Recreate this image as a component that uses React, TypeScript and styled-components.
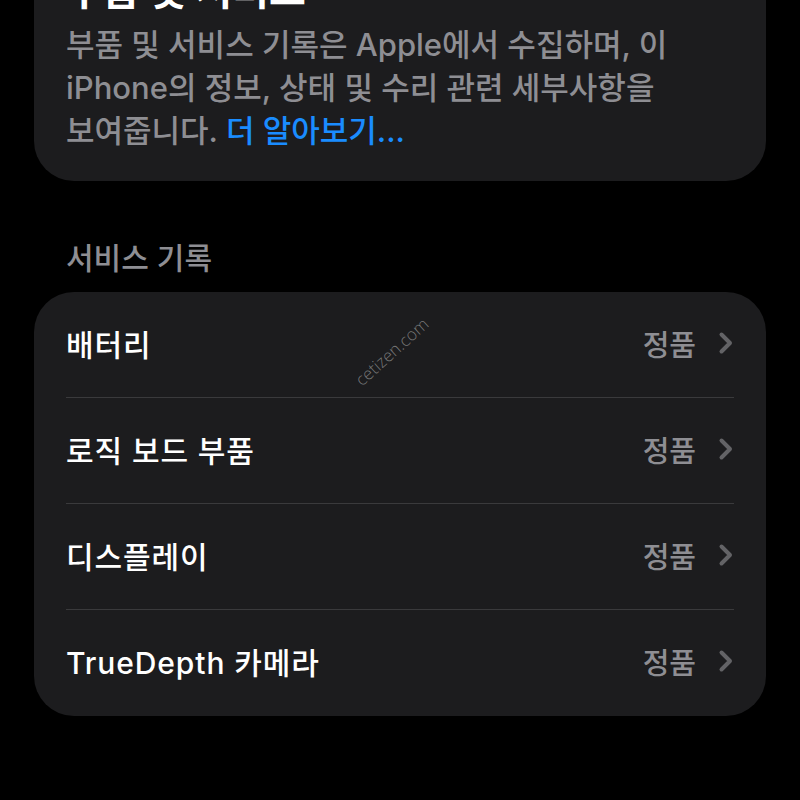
import React from "react";
import styled, { createGlobalStyle } from "styled-components";

const GlobalStyle = createGlobalStyle`
  html, body {
    margin: 0;
    padding: 0;
    background: #000;
  }
  body {
    font-family: "Inter", "Noto Sans CJK KR", "Noto Sans", sans-serif;
    -webkit-font-smoothing: antialiased;
  }
`;

const Page = styled.div`
  width: 800px;
  height: 800px;
  overflow: hidden;
  background: #000;
`;

const Inner = styled.div`
  margin-top: -57px;
  padding: 0 34px;
  display: flex;
  flex-direction: column;
`;

const Card = styled.section`
  position: relative;
  background: #1c1c1e;
  border-radius: 40px;
`;

const InfoCard = styled(Card)`
  padding: 24px 32px 29px;
`;

const Title = styled.h2`
  margin: 0;
  font-size: 40px;
  line-height: 47px;
  font-weight: 700;
  color: #fff;
`;

const Desc = styled.p`
  margin: 9px 0 0;
  font-size: 31px;
  line-height: 43px;
  font-weight: 500;
  color: #8e8e93;
  white-space: nowrap;
`;

const Link = styled.span`
  color: #1a8cff;
`;

const SectionHeader = styled.h3`
  margin: 60px 0 17px 32px;
  font-size: 30px;
  line-height: 34px;
  font-weight: 500;
  color: #8e8e93;
`;

const Row = styled.div<{ $last?: boolean }>`
  margin: 0 32px;
  height: 106px;
  display: flex;
  align-items: center;
  justify-content: space-between;
  border-bottom: ${(p) => (p.$last ? "none" : "1.5px solid #3a3a3c")};
  box-sizing: border-box;
`;

const Label = styled.span`
  font-size: 30px;
  font-weight: 500;
  color: #fff;
  letter-spacing: 0.9px;
  margin-top: -4px;
`;

const Value = styled.span`
  display: flex;
  align-items: center;
  gap: 22px;
  font-size: 29px;
  font-weight: 500;
  color: #8e8e93;
  margin-top: -4px;
`;

const Watermark = styled.span`
  position: absolute;
  left: 312px;
  top: 48px;
  font-size: 17px;
  font-weight: 300;
  color: rgba(150, 150, 150, 0.75);
  transform: rotate(-42deg);
  transform-origin: center;
  font-family: "Open Sans", sans-serif;
  pointer-events: none;
`;

const Chevron = () => (
  <svg width="16" height="24" viewBox="0 0 16 24">
    <path
      d="M3.5 3.5 L12 12 L3.5 20.5"
      fill="none"
      stroke="#636366"
      strokeWidth="4"
      strokeLinecap="round"
      strokeLinejoin="round"
    />
  </svg>
);

const rows = ["배터리", "로직 보드 부품", "디스플레이", "TrueDepth 카메라"];

const App = () => {
  return (
    <Page>
      <GlobalStyle />
      <Inner>
        <InfoCard>
          <Title>부품 및 서비스</Title>
          <Desc>
            부품 및 서비스 기록은 Apple에서 수집하며, 이
            <br />
            iPhone의 정보, 상태 및 수리 관련 세부사항을
            <br />
            보여줍니다. <Link>더 알아보기...</Link>
          </Desc>
        </InfoCard>
        <SectionHeader>서비스 기록</SectionHeader>
        <Card>
          {rows.map((r, i) => (
            <Row key={r} $last={i === rows.length - 1}>
              <Label>{r}</Label>
              <Value>
                정품
                <Chevron />
              </Value>
            </Row>
          ))}
          <Watermark>cetizen.com</Watermark>
        </Card>
      </Inner>
    </Page>
  );
};

export default App;
